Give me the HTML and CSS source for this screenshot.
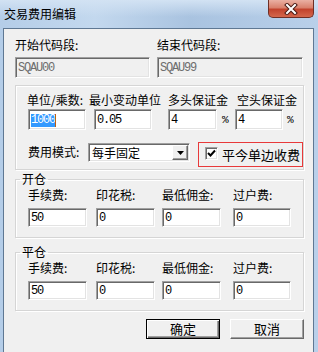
FILE: index.html
```html
<!DOCTYPE html>
<html lang="zh-CN">
<head>
  <meta charset="UTF-8" />
  <title>交易费用编辑</title>
  <link rel="stylesheet" href="styles.css">
</head>
<body>
  <div class="window">
    <div class="titlebar">
      <span class="title">交易费用编辑</span>
      <span class="close">
        <svg width="14" height="12" viewBox="0 0 14 12">
          <path d="M3 2 L11 10 M11 2 L3 10" stroke="#4a1a14" stroke-width="4" stroke-linecap="square"/>
          <path d="M3 2 L11 10 M11 2 L3 10" stroke="#fff" stroke-width="2" stroke-linecap="square"/>
        </svg>
      </span>
    </div>

    <div class="client">
      <!-- code range -->
      <div class="code-row">
        <div class="field">
          <div class="lbl">开始代码段:</div>
          <div class="edit disabled tall">SQAU00</div>
        </div>
        <div class="field">
          <div class="lbl">结束代码段:</div>
          <div class="edit disabled tall">SQAU99</div>
        </div>
      </div>

      <div class="group main">
        <div class="label-row">
          <span class="w1">单位/乘数:</span>
          <span class="w2">最小变动单位</span>
          <span class="w3">多头保证金</span>
          <span>空头保证金</span>
        </div>
        <div class="input-row">
          <div class="edit tall unit"><span class="sel">1000</span><span class="caret"></span></div>
          <div class="edit tall unit">0.05</div>
          <div class="edit tall margin long">4</div>
          <span class="pct">%</span>
          <div class="edit tall margin">4</div>
          <span class="pct">%</span>
        </div>
        <div class="mode-row">
          <span class="mode-lbl">费用模式:</span>
          <div class="combo">
            <span class="combo-text">每手固定</span>
            <span class="combo-btn">
              <svg width="7" height="4" viewBox="0 0 7 4"><path d="M0 0 H7 L3.5 4 Z" fill="#000"/></svg>
            </span>
          </div>
          <label class="check">
            <span class="box">
              <svg width="9" height="9" viewBox="0 0 9 9"><path d="M1 4 L3.5 6.5 L8 1.5" fill="none" stroke="#000" stroke-width="2"/></svg>
            </span>
            平今单边收费
          </label>
        </div>
      </div>

      <fieldset class="group fee">
        <legend>开仓</legend>
        <div class="fee-grid">
          <div class="lbl">手续费:</div>
          <div class="lbl">印花税:</div>
          <div class="lbl">最低佣金:</div>
          <div class="lbl">过户费:</div>
          <div class="edit">50</div>
          <div class="edit">0</div>
          <div class="edit">0</div>
          <div class="edit">0</div>
        </div>
      </fieldset>

      <fieldset class="group fee second">
        <legend>平仓</legend>
        <div class="fee-grid">
          <div class="lbl">手续费:</div>
          <div class="lbl">印花税:</div>
          <div class="lbl">最低佣金:</div>
          <div class="lbl">过户费:</div>
          <div class="edit">50</div>
          <div class="edit">0</div>
          <div class="edit">0</div>
          <div class="edit">0</div>
        </div>
      </fieldset>

      <div class="buttons">
        <button class="btn default">确定</button>
        <button class="btn">取消</button>
      </div>
    </div>
  </div>
</body>
</html>
```

FILE: styles.css
```css
* {
  margin: 0;
  padding: 0;
  box-sizing: border-box;
}

body {
  width: 318px;
  height: 352px;
  overflow: hidden;
  font-family: "Noto Sans CJK SC", sans-serif;
  font-size: 12px;
  color: #000;
}

.window {
  height: 352px;
  display: flex;
  flex-direction: column;
  background: linear-gradient(90deg, #b4cde8 0%, #c3d8ee 30%, #a9c3e0 60%, #b9d0ea 100%);
}

.titlebar {
  height: 28px;
  flex-shrink: 0;
  display: flex;
  align-items: flex-start;
  padding: 0 4px;
  background: linear-gradient(#d2e2f3, rgba(185, 208, 234, 0) 60%);
}

.title {
  margin-top: 6px;
  line-height: 16px;
  font-size: 12px;
}

.close {
  margin-left: auto;
  width: 46px;
  height: 18px;
  border: 1px solid #6e2f26;
  border-top: none;
  border-radius: 0 0 5px 5px;
  background: linear-gradient(#eab0a3, #d9816d 45%, #c2432d 55%, #d4674c);
  display: flex;
  align-items: center;
  justify-content: center;
}

.client {
  flex: 1;
  margin: 0 4px 0 3px;
  background: #f0f0f0;
  border: 1px solid #5f7893;
  border-bottom: none;
  padding: 8px 9px 0 11px;
}

.lbl {
  line-height: 16px;
  white-space: nowrap;
}

/* sunken edit box */
.edit {
  height: 19px;
  background: #fff;
  border-top: 1px solid #a0a0a0;
  border-left: 1px solid #a0a0a0;
  border-bottom: 1px solid #fff;
  border-right: 1px solid #fff;
  box-shadow: inset 1px 1px 0 #696969, inset -1px -1px 0 #e3e3e3;
  padding: 1px 0 0 2px;
  font-family: "Liberation Mono", monospace;
  font-size: 12px;
  letter-spacing: -1.2px;
  line-height: 15px;
  white-space: nowrap;
  display: flex;
  align-items: center;
}

.edit.tall {
  height: 21px;
}

.edit.disabled {
  background: #f0f0f0;
  color: #6d6d6d;
}

.code-row {
  display: grid;
  grid-template-columns: 135px 146px;
  column-gap: 7px;
}

.code-row .edit {
  margin-top: 4px;
}

.group {
  border: 1px solid #d5d5d5;
  box-shadow: inset 1px 1px 0 #fff, 1px 1px 0 #fff;
}

.group.main {
  margin-top: 7px;
  padding: 6px 0 2px 11px;
}

.label-row {
  display: flex;
  line-height: 16px;
  white-space: nowrap;
}

.w1 { width: 62px; }
.w2 { width: 79px; }
.w3 { width: 69px; }

.input-row {
  display: flex;
  align-items: center;
  margin: 1px 0 0 1px;
}

.unit {
  width: 58px;
  margin-right: 8px;
}

.unit + .unit {
  margin-right: 8px;
}

.margin {
  width: 48px;
}

.margin.long {
  width: 49px;
  margin-left: 0;
}

.input-row .unit:nth-child(2) {
  margin-right: 16px;
}

.pct {
  font-family: "Liberation Mono", monospace;
  font-size: 11px;
  width: 18px;
  padding-left: 5px;
}

.pct:last-child {
  padding-left: 4px;
}

.sel {
  background: #3399ff;
  color: #fff;
  line-height: 13px;
}

.caret {
  width: 1px;
  height: 13px;
  background: #c06010;
}

.mode-row {
  display: flex;
  align-items: flex-start;
  margin-top: 12px;
}

.mode-lbl {
  width: 60px;
  margin: 2px 0 0 1px;
  line-height: 16px;
  white-space: nowrap;
}

.combo {
  width: 102px;
  height: 19px;
  margin-top: 1px;
  background: #fff;
  border-top: 1px solid #a0a0a0;
  border-left: 1px solid #a0a0a0;
  border-bottom: 1px solid #fff;
  border-right: 1px solid #fff;
  box-shadow: inset 1px 1px 0 #696969, inset -1px -1px 0 #e3e3e3;
  display: flex;
  align-items: center;
  padding: 2px 1px 2px 3px;
}

.combo-text {
  flex: 1;
  line-height: 15px;
}

.combo-btn {
  width: 16px;
  height: 15px;
  background: #f0f0f0;
  border-top: 1px solid #fff;
  border-left: 1px solid #fff;
  border-right: 1px solid #696969;
  border-bottom: 1px solid #696969;
  box-shadow: inset -1px -1px 0 #a0a0a0;
  display: flex;
  align-items: center;
  justify-content: center;
}

.check {
  flex-shrink: 0;
  width: 105px;
  height: 25px;
  margin-left: 8px;
  border: 1px solid #e8393a;
  display: flex;
  align-items: flex-start;
  font-size: 13px;
  line-height: 17px;
  white-space: nowrap;
  padding: 3px 0 0 6px;
}

.box {
  width: 13px;
  height: 13px;
  margin: 1px 4px 0 0;
  background: #fff;
  border-top: 1px solid #a0a0a0;
  border-left: 1px solid #a0a0a0;
  border-bottom: 1px solid #fff;
  border-right: 1px solid #fff;
  box-shadow: inset 1px 1px 0 #696969, inset -1px -1px 0 #e3e3e3;
  display: flex;
  align-items: center;
  justify-content: center;
}

fieldset.fee {
  margin-top: 1px;
  padding: 0 0 10px 12px;
  min-width: 0;
}

fieldset.second {
  margin-top: 6px;
}

legend {
  margin-left: -8px;
  padding: 0 2px;
  line-height: 16px;
}

.fee-grid {
  display: grid;
  grid-template-columns: 68px 66px 71px 58px;
  row-gap: 5px;
}

.fee-grid .edit {
  width: 59px;
}

.fee-grid .edit:last-child {
  width: 58px;
}

.buttons {
  display: flex;
  justify-content: flex-end;
  gap: 10px;
  margin-top: 8px;
}

.btn {
  width: 74px;
  height: 20px;
  font-family: "Noto Sans CJK SC", sans-serif;
  font-size: 13px;
  line-height: 16px;
  background: #f0f0f0;
  border-top: 1px solid #fff;
  border-left: 1px solid #fff;
  border-right: 1px solid #696969;
  border-bottom: 1px solid #696969;
  box-shadow: inset -1px -1px 0 #a0a0a0;
}

.btn.default {
  border: 1px solid #000;
  box-shadow: inset 1px 1px 0 #fff, inset -1px -1px 0 #696969, inset -2px -2px 0 #a0a0a0;
}
```
